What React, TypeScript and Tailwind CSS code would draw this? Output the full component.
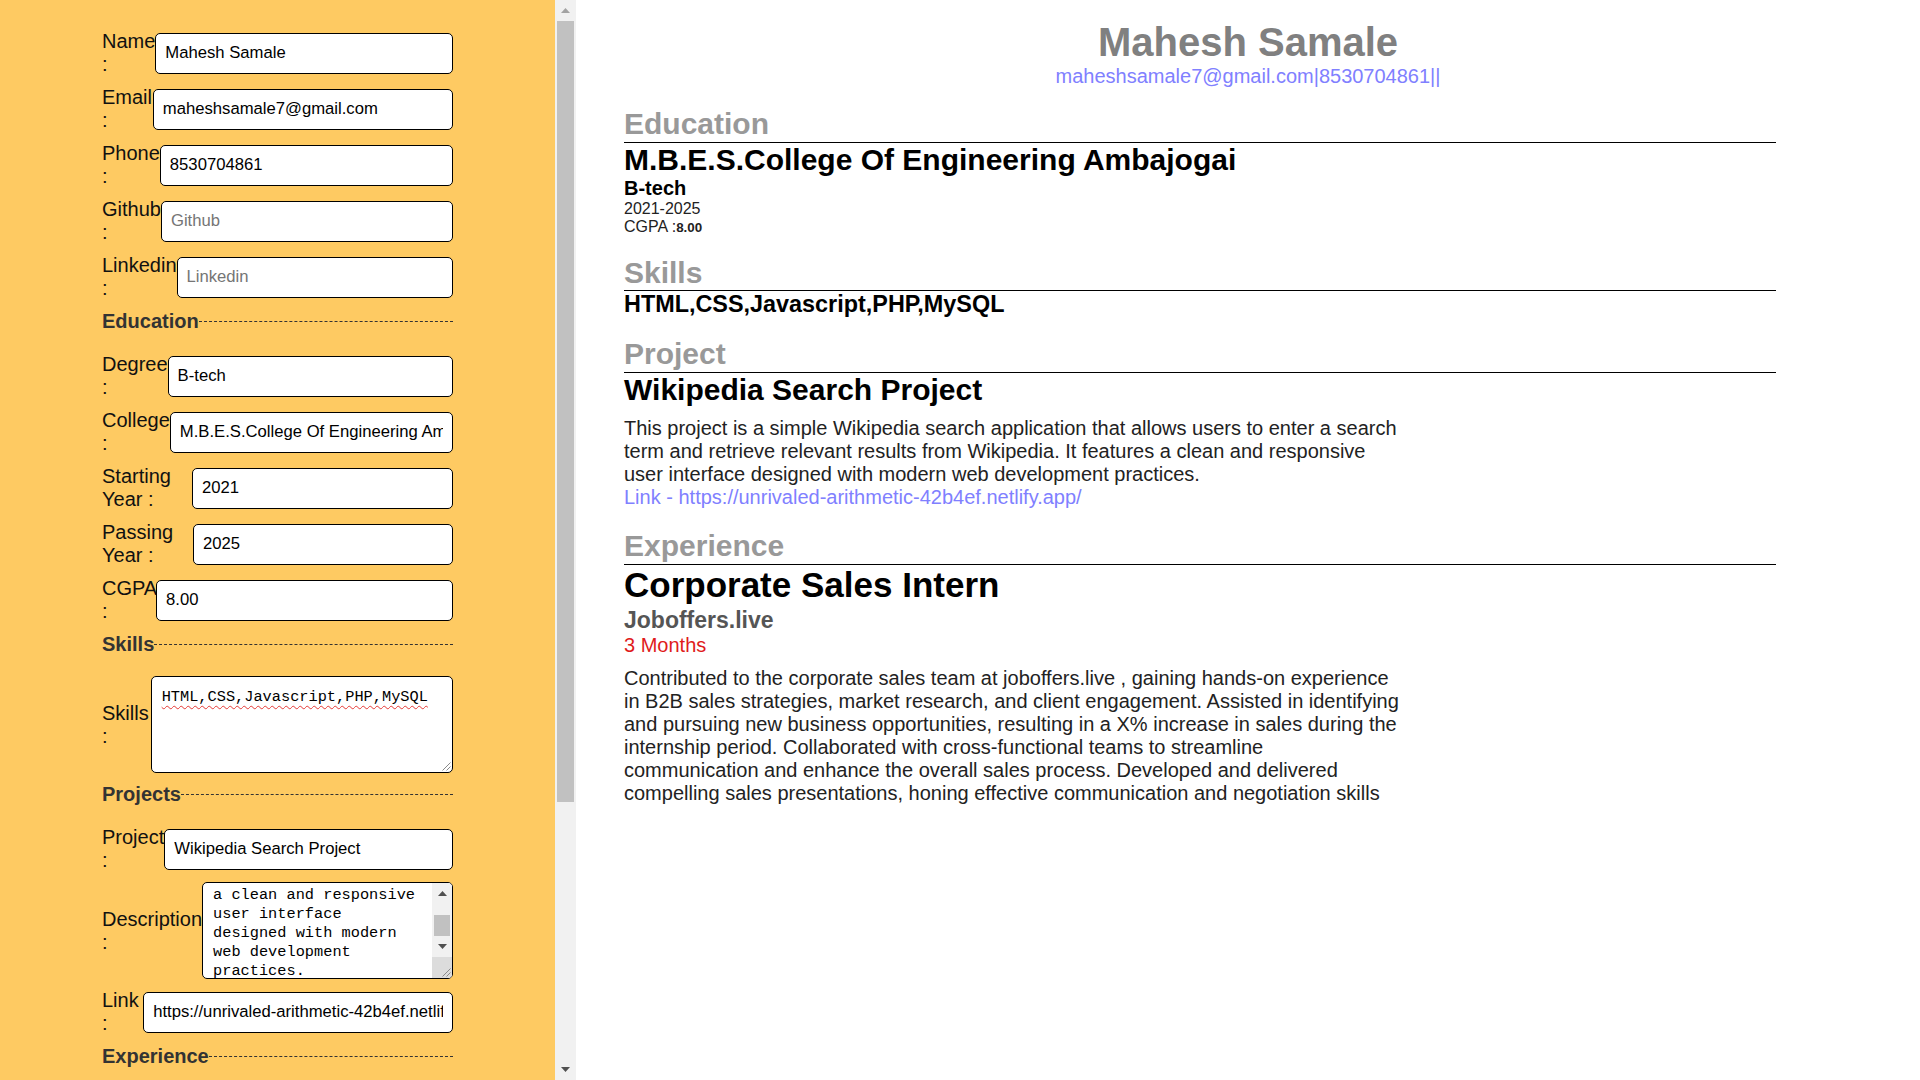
import React from "react";

function Field({ label, value, placeholder }: { label: string; value?: string; placeholder?: string }) {
  return (
    <div className="flex items-center mb-[10px]">
      <label className="text-[20px] leading-[23px] text-[#111]">{label}</label>
      <input
        readOnly
        defaultValue={value}
        placeholder={placeholder}
        className="w-[357px] min-w-0 h-[41px] border border-black rounded-[5px] bg-white pl-[9px] pr-[9px] text-[16.67px] text-black placeholder:text-[#757575] outline-none"
      />
    </div>
  );
}

function FormHeading({ title, extra }: { title: string; extra?: string }) {
  return (
    <div className={"flex items-center mb-[20px] " + (extra ?? "")}>
      <span className="text-[20px] leading-[23px] font-bold text-[#333]">{title}</span>
      <div className="flex-1 border-t border-dashed border-[#333]" />
    </div>
  );
}

function Grip() {
  return (
    <svg width="10" height="10" viewBox="0 0 10 10" className="block">
      <line x1="9.5" y1="1.5" x2="1.5" y2="9.5" stroke="#8a8a8a" strokeWidth="1" />
      <line x1="9.5" y1="5.5" x2="5.5" y2="9.5" stroke="#8a8a8a" strokeWidth="1" />
    </svg>
  );
}

function Tri({ up, color }: { up?: boolean; color: string }) {
  return (
    <svg width="9" height="5" viewBox="0 0 9 5" className="block">
      <polygon points={up ? "0,5 4.5,0 9,5" : "0,0 9,0 4.5,5"} fill={color} />
    </svg>
  );
}

const descLines =
  "This project is a\nsimple Wikipedia\nsearch application\nthat allows users to\nenter a search term\nand retrieve relevant\nresults from\nWikipedia. It features\na clean and responsive\nuser interface\ndesigned with modern\nweb development\npractices.";

const expText =
  "Contributed to the corporate sales team at joboffers.live , gaining hands-on experience in B2B sales strategies, market research, and client engagement. Assisted in identifying and pursuing new business opportunities, resulting in a X% increase in sales during the internship period. Collaborated with cross-functional teams to streamline communication and enhance the overall sales process. Developed and delivered compelling sales presentations, honing effective communication and negotiation skills";

export default function App() {
  return (
    <div className="flex w-screen h-screen overflow-hidden font-['Liberation_Sans',Arial,sans-serif] text-black">
      {/* Left form panel */}
      <div className="w-[555px] h-screen overflow-hidden bg-[#feca62] shrink-0">
        <div className="ml-[102px] w-[351px] pt-[30px]">
          <Field label="Name :" value="Mahesh Samale" />
          <Field label="Email :" value="maheshsamale7@gmail.com" />
          <Field label="Phone :" value="8530704861" />
          <Field label="Github :" placeholder="Github" />
          <Field label="Linkedin :" placeholder="Linkedin" />
          <FormHeading title="Education" />
          <Field label="Degree :" value="B-tech" />
          <Field label="College :" value="M.B.E.S.College Of Engineering Ambajogai" />
          <Field label="Starting Year :" value="2021" />
          <Field label="Passing Year :" value="2025" />
          <Field label="CGPA :" value="8.00" />
          <FormHeading title="Skills" />
          <div className="flex items-center mb-[10px] mt-[1px]">
            <label className="text-[20px] leading-[23px] text-[#111]">Skills :</label>
            <div className="relative w-[357px] min-w-0 h-[97px] border border-black rounded-[5px] bg-white pl-[10px] pt-[11px] font-['Liberation_Mono',monospace] text-[15.3px] leading-[19px] text-black">
              <span className="underline decoration-wavy decoration-[#e53935] decoration-1 underline-offset-[4px]">
                HTML,CSS,Javascript,PHP,MySQL
              </span>
              <div className="absolute right-[1px] bottom-[1px]">
                <Grip />
              </div>
            </div>
          </div>
          <FormHeading title="Projects" />
          <Field label="Project :" value="Wikipedia Search Project" />
          <div className="flex items-center mb-[10px] mt-[1px]">
            <label className="text-[20px] leading-[23px] text-[#111]">Description :</label>
            <div className="flex w-[357px] min-w-0 h-[97px] border border-black rounded-[5px] bg-white overflow-hidden">
              <div className="flex-1 min-w-0 flex flex-col justify-end overflow-hidden pl-[10px]">
                <div className="w-[207px] mb-[-3px] whitespace-pre-line font-['Liberation_Mono',monospace] text-[15.3px] leading-[19px] text-black">
                  {descLines}
                </div>
              </div>
              <div className="w-[20px] shrink-0 flex flex-col bg-[#f1f1f1]">
                <div className="h-[21px] flex items-center justify-center">
                  <Tri up color="#505050" />
                </div>
                <div className="flex-1 px-[2px]">
                  <div className="mt-[11px] h-[21px] bg-[#c1c1c1]" />
                </div>
                <div className="h-[21px] flex items-center justify-center">
                  <Tri color="#505050" />
                </div>
                <div className="h-[21px] bg-[#dcdcdc] flex items-end justify-end pr-[1px] pb-[1px]">
                  <Grip />
                </div>
              </div>
            </div>
          </div>
          <Field label="Link :" value="https://unrivaled-arithmetic-42b4ef.netlify.app/" />
          <FormHeading title="Experience" extra="mt-[1px]" />
          <Field label="Position :" value="Corporate Sales Intern" />
        </div>
      </div>

      {/* Left panel scrollbar */}
      <div className="w-[21px] h-screen shrink-0 flex flex-col bg-[#f1f1f1]">
        <div className="h-[21px] flex items-center justify-center">
          <Tri up color="#a3a3a3" />
        </div>
        <div className="h-[781px] mx-[2px] bg-[#c1c1c1]" />
        <div className="flex-1" />
        <div className="h-[21px] flex items-center justify-center">
          <Tri color="#505050" />
        </div>
      </div>

      {/* Right resume preview */}
      <div className="flex-1 h-screen overflow-hidden bg-white">
        <div className="pt-[19px] text-center">
          <h1 className="text-[40px] leading-[46px] font-bold text-[#808080]">Mahesh Samale</h1>
          <div className="text-[20px] leading-[23px] text-[#8080ff]">maheshsamale7@gmail.com|8530704861||</div>
        </div>
        <div className="pl-[48px] w-[1200px]">
          <h2 className="mt-[19px] text-[30px] leading-[34.5px] font-bold text-[#999] border-b border-black">Education</h2>
          <div className="text-[30px] leading-[34.5px] font-bold text-black">M.B.E.S.College Of Engineering Ambajogai</div>
          <div className="text-[20px] leading-[23px] font-bold text-black">B-tech</div>
          <div className="text-[16px] leading-[18.4px] text-[#222]">2021-2025</div>
          <div className="text-[16px] leading-[18.4px] text-[#222]">
            CGPA :<span className="text-[13.4px] font-bold">8.00</span>
          </div>

          <h2 className="mt-[18px] text-[30px] leading-[34.5px] font-bold text-[#999] border-b border-black">Skills</h2>
          <div className="text-[23.4px] leading-[27px] font-bold text-black">HTML,CSS,Javascript,PHP,MySQL</div>

          <h2 className="mt-[19px] text-[30px] leading-[34.5px] font-bold text-[#999] border-b border-black">Project</h2>
          <div className="text-[30px] leading-[34.5px] font-bold text-black">Wikipedia Search Project</div>
          <div className="mt-[10px] w-[776px] text-[20px] leading-[23px] text-[#222]">
            <p>
              This project is a simple Wikipedia search application that allows users to enter a search term and retrieve
              relevant results from Wikipedia. It features a clean and responsive user interface designed with modern web
              development practices.
            </p>
            <a className="block text-[#8080ff]">Link - https://unrivaled-arithmetic-42b4ef.netlify.app/</a>
          </div>

          <h2 className="mt-[20px] text-[30px] leading-[34.5px] font-bold text-[#999] border-b border-black">Experience</h2>
          <div className="text-[35px] leading-[40.25px] font-bold text-black">Corporate Sales Intern</div>
          <div className="mt-[2px] text-[23px] leading-[26.5px] font-bold text-[#555]">Joboffers.live</div>
          <div className="text-[20px] leading-[23px] text-[#e01b1b]">3 Months</div>
          <p className="mt-[10px] w-[776px] text-[20px] leading-[23px] text-[#222]">{expText}</p>
        </div>
      </div>
    </div>
  );
}
